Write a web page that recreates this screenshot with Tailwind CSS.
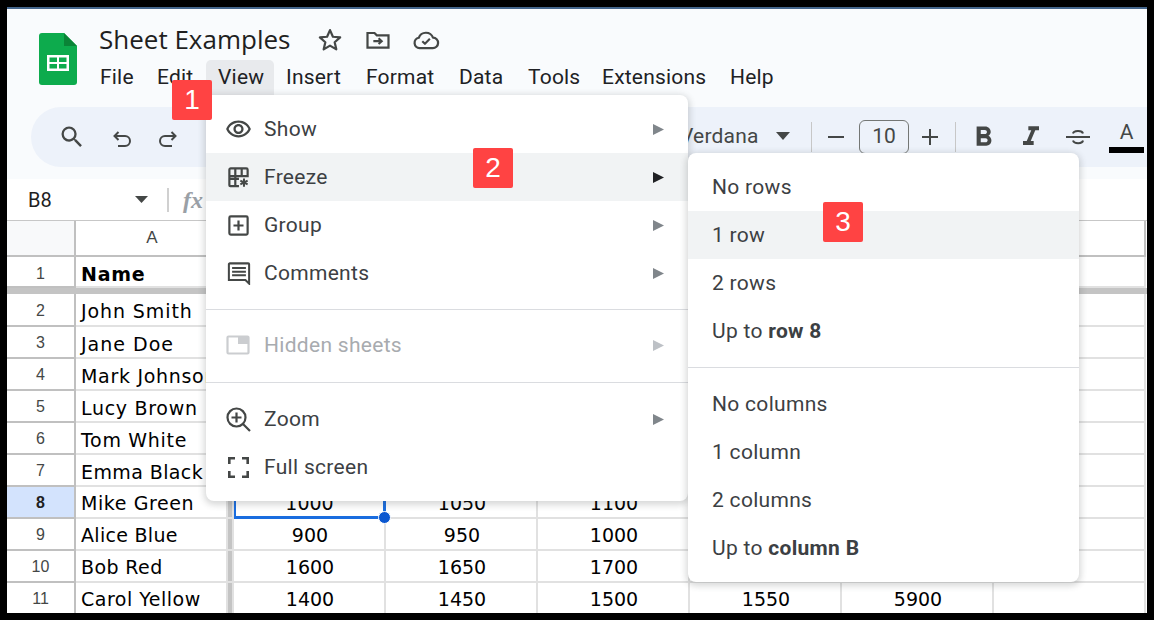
<!DOCTYPE html>
<html>
<head>
<meta charset="utf-8">
<script src="https://cdn.jsdelivr.net/npm/@tailwindcss/browser@4"></script>
</head>
<body class="bg-black">
<div class="relative w-[1154px] h-[620px] overflow-hidden bg-black pt-[7px] pl-[7px] font-['Roboto',sans-serif]">
  <div class="w-[1140px] h-[606px] overflow-hidden flex flex-col bg-[#f9fbfd] border-t-2 border-[#44668c]">
    <!-- header -->
    <div class="h-[98px] flex shrink-0">
      <svg class="ml-[32px] mt-[24px] w-[38px] h-[52px]" viewBox="0 0 38 52"><path d="M3 0H25L38 13V49a3 3 0 0 1-3 3H3a3 3 0 0 1-3-3V3a3 3 0 0 1 3-3z" fill="#0dab4d"/><path d="M25 0L38 13H25z" fill="#0a8437"/><path d="M8 22H30V38H8z M10.500 24.500V29H18V24.500z M20 24.500V29H27.500V24.500z M10.500 31V35.500H18V31z M20 31V35.500H27.500V31z" fill="#fff" fill-rule="evenodd"/></svg>
      <div class="ml-[10px] flex flex-col">
        <div class="flex items-center h-[36px] mt-[12px]">
          <span class="ml-[12px] text-[26px] leading-[36px] text-[#1f1f1f] font-['Open_Sans',sans-serif]">Sheet Examples</span>
          <svg class="ml-[26px] w-[28px] h-[28px] mt-[2px]" viewBox="0 0 24 24" fill="none" stroke="#444746" stroke-width="1.900" stroke-linejoin="round"><path d="M12 3.500l2.500 5.700 6.200.6-4.700 4.100 1.400 6.100L12 16.800l-5.400 3.200L8 13.900 3.300 9.800l6.200-.6z"/></svg>
          <svg class="ml-[20px] w-[28px] h-[28px] mt-[2px]" viewBox="0 0 24 24" fill="none" stroke="#444746" stroke-width="1.900"><path d="M3 18.500V6h6l2 2h10v10.500z"/><path d="M8 13h7M12.500 10.500L15.200 13l-2.700 2.500" stroke-width="1.800"/></svg>
          <svg class="ml-[20px] w-[28px] h-[28px] mt-[2px]" viewBox="0 0 24 24" fill="none" stroke="#444746" stroke-width="1.900" stroke-linejoin="round"><path d="M6.500 19a4.500 4.500 0 0 1-.7-8.900A6.500 6.500 0 0 1 18 10a4.500 4.500 0 0 1-.3 9z"/><path d="M8.800 13l2.300 2.300 4.200-4.300" stroke-width="1.800"/></svg>
        </div>
        <div class="flex h-[35px] mt-[3px] text-[21px] tracking-[0.2px] leading-[35px] text-[#202124]">
          <span class="w-[57px] ml-[13px]">File</span>
          <span class="w-[49px]">Edit</span>
          <span class="w-[68px] mr-[12px] pl-[12px] bg-[#e8eaed] rounded-t-[5px]">View</span>
          <span class="w-[80px]">Insert</span>
          <span class="w-[93px]">Format</span>
          <span class="w-[69px]">Data</span>
          <span class="w-[74px]">Tools</span>
          <span class="w-[128px]">Extensions</span>
          <span>Help</span>
        </div>
      </div>
    </div>
    <!-- toolbar -->
    <div class="h-[60px] ml-[24px] shrink-0 bg-[#edf2fa] rounded-l-[30px] flex items-center relative text-[#444746]">
      <svg class="ml-[27px] w-[28px] h-[28px]" viewBox="0 0 24 24" fill="#444746"><path d="M15.500 14h-.79l-.28-.27A6.471 6.471 0 0 0 16 9.500 6.500 6.500 0 1 0 9.500 16c1.610 0 3.090-.59 4.230-1.570l.27.28v.79l5 4.990L20.490 19l-4.990-5zm-6 0C7.010 14 5 11.990 5 9.500S7.010 5 9.500 5 14 7.010 14 9.500 11.990 14 9.500 14z"/></svg>
      <svg class="ml-[24px] w-[24px] h-[24px] mt-[4px]" viewBox="0 0 24 24" fill="none" stroke="#444746" stroke-width="2"><path d="M8.500 5L4.500 9l4 4M4.500 9H15a4.500 4.500 0 0 1 0 10H8"/></svg>
      <svg class="ml-[22px] w-[24px] h-[24px] mt-[4px]" viewBox="0 0 24 24" fill="none" stroke="#444746" stroke-width="2"><path d="M15.500 5l4 4-4 4M19.500 9H9a4.500 4.500 0 0 0 0 10h7"/></svg>
      <span class="ml-[500px] w-[83px] text-[21px] tracking-[0.2px] text-[#444746]">Verdana</span>
      <svg class="ml-[12px] w-[16px] h-[8px] -mt-[2px]" viewBox="0 0 16 8"><path d="M1 0h14L8 8z" fill="#444746"/></svg>
      <div class="ml-[20px] w-[1px] h-[30px] bg-[#c7c7c7]"></div>
      <svg class="ml-[15px] w-[18px] h-[18px]" viewBox="0 0 18 18"><path d="M1 8h16v2H1z" fill="#444746"/></svg>
      <div class="ml-[14px] w-[50px] h-[34px] border border-[#747775] rounded-[6px] text-center text-[21px] leading-[30px]">10</div>
      <svg class="ml-[12px] w-[18px] h-[18px]" viewBox="0 0 18 18"><path d="M1 8h7V1h2v7h7v2h-7v7H8v-7H1z" fill="#444746"/></svg>
      <div class="ml-[16px] w-[1px] h-[30px] bg-[#c7c7c7]"></div>
      <svg class="ml-[11px] w-[33px] h-[33px]" viewBox="0 0 24 24" fill="#444746"><path d="M15.600 10.790c.97-.67 1.650-1.770 1.650-2.790 0-2.260-1.750-4-4-4H7v14h7.040c2.090 0 3.710-1.700 3.710-3.790 0-1.520-.86-2.820-2.150-3.420zM10 6.500h3c.83 0 1.500.67 1.500 1.500s-.67 1.500-1.500 1.500h-3v-3zm3.500 9H10v-3h3.500c.83 0 1.500.67 1.500 1.500s-.67 1.500-1.500 1.500z"/></svg>
      <svg class="ml-[15px] w-[32px] h-[32px]" viewBox="0 0 24 24" fill="#444746"><path d="M10 4v3h2.210l-3.420 8H6v3h8v-3h-2.210l3.420-8H18V4z"/></svg>
      <svg class="ml-[18px] w-[26px] h-[24px]" viewBox="0 0 26 24" fill="none" stroke="#444746" stroke-width="2"><path d="M1 12h24M8 8.500C8.500 5.500 17 5 18 8.500M8 15.500c1 3.500 9.500 3.500 10 0"/></svg>
      <div class="ml-[18px] w-[35px] h-[36px] flex flex-col items-center">
        <span class="text-[21px] leading-[26px]">A</span>
        <div class="w-[35px] h-[6px] bg-black mt-[2px]"></div>
      </div>
    </div>
    <div class="h-[12px] shrink-0"></div>
    <!-- formula bar -->
    <div class="h-[42px] shrink-0 bg-white border-b border-[#c7c7c7] flex items-center text-[#1f1f1f]">
      <span class="ml-[21px] w-[100px] text-[20px]">B8</span>
      <svg class="ml-[7px] w-[13px] h-[7px]" viewBox="0 0 13 7"><path d="M0 0h13L6.500 7z" fill="#444746"/></svg>
      <div class="ml-[19px] w-[2px] h-[24px] bg-[#d0d0d0]"></div>
      <span class="ml-[14px] text-[24px] font-bold italic text-[#9aa0a6] font-['Liberation_Serif',serif]">fx</span>
    </div>
    <!-- grid -->
    <div class="flex-1 bg-white overflow-hidden font-['DejaVu_Sans',sans-serif] text-[19px] text-black [&>div]:grid [&>div]:grid-rows-[minmax(0,1fr)] [&>div]:grid-cols-[69px_152px_6px_152px_152px_152px_152px_152px_152px] [&>div>div]:border-r-2 [&>div>div]:border-b-2 [&>div>div]:border-[#e1e1e1] [&>div>div]:whitespace-nowrap [&>div>div]:overflow-hidden">
      <div class="h-[36px] text-[17px] text-[#444746] font-['Liberation_Sans',sans-serif] text-center leading-[34px] [&>div]:!border-[#c0c0c0]">
        <div class="bg-[#f8f9fa]"></div><div class="pl-[2px]">A</div><div></div><div></div><div></div><div></div><div></div><div></div><div></div>
      </div>
      <div class="h-[31px] leading-[30px] [&>div]:pt-[2px]">
        <div class="text-[16px] text-[#444746] text-center font-['Liberation_Sans',sans-serif] !border-[#c0c0c0]">1</div><div class="font-bold pl-[5px] tracking-[0.75px]">Name</div><div></div><div></div><div></div><div></div><div></div><div></div><div></div>
      </div>
      <div class="h-[6px] bg-[#c4c4c4]"></div>
      <div class="h-[33px] leading-[31px] [&>div]:pt-[2px]">
        <div class="text-[16px] leading-[29px] text-[#444746] text-center font-['Liberation_Sans',sans-serif] !border-[#c0c0c0]">2</div><div class="pl-[5px] tracking-[0.9px]">John Smith</div><div class="bg-[#c4c4c4]"></div><div></div><div></div><div></div><div></div><div></div><div></div>
      </div>
      <div class="h-[32px] leading-[30px] [&>div]:pt-[2px]">
        <div class="text-[16px] leading-[28px] text-[#444746] text-center font-['Liberation_Sans',sans-serif] !border-[#c0c0c0]">3</div><div class="pl-[5px] tracking-[1px]">Jane Doe</div><div class="bg-[#c4c4c4]"></div><div></div><div></div><div></div><div></div><div></div><div></div>
      </div>
      <div class="h-[32px] leading-[30px] [&>div]:pt-[2px]">
        <div class="text-[16px] leading-[28px] text-[#444746] text-center font-['Liberation_Sans',sans-serif] !border-[#c0c0c0]">4</div><div class="pl-[5px] tracking-[0.7px]">Mark Johnson</div><div class="bg-[#c4c4c4]"></div><div></div><div></div><div></div><div></div><div></div><div></div>
      </div>
      <div class="h-[32px] leading-[30px] [&>div]:pt-[2px]">
        <div class="text-[16px] leading-[28px] text-[#444746] text-center font-['Liberation_Sans',sans-serif] !border-[#c0c0c0]">5</div><div class="pl-[5px] tracking-[0.7px]">Lucy Brown</div><div class="bg-[#c4c4c4]"></div><div></div><div></div><div></div><div></div><div></div><div></div>
      </div>
      <div class="h-[32px] leading-[30px] [&>div]:pt-[2px]">
        <div class="text-[16px] leading-[28px] text-[#444746] text-center font-['Liberation_Sans',sans-serif] !border-[#c0c0c0]">6</div><div class="pl-[5px] tracking-[0.7px]">Tom White</div><div class="bg-[#c4c4c4]"></div><div></div><div></div><div></div><div></div><div></div><div></div>
      </div>
      <div class="h-[32px] leading-[30px] [&>div]:pt-[2px]">
        <div class="text-[16px] leading-[28px] text-[#444746] text-center font-['Liberation_Sans',sans-serif] !border-[#c0c0c0]">7</div><div class="pl-[5px] tracking-[0.4px]">Emma Black</div><div class="bg-[#c4c4c4]"></div><div></div><div></div><div></div><div></div><div></div><div></div>
      </div>
      <div class="h-[32px] leading-[29px] [&>div]:pt-[2px]">
        <div class="text-[16px] leading-[28px] text-[#1f1f1f] font-bold bg-[#d3e3fd] text-center font-['Liberation_Sans',sans-serif] !border-[#c0c0c0]">8</div><div class="pl-[5px] tracking-[0.6px]">Mike Green</div><div class="bg-[#c4c4c4]"></div><div class="text-center relative !overflow-visible !border-r-[#1a6ddf] !border-b-[#1a6ddf] !border-r-[3px] !border-b-[3px] border-l-2 !border-l-[#1a6ddf]">1000<div class="absolute -right-[8px] -bottom-[8px] w-[13px] h-[13px] rounded-full bg-[#0b57d0] border border-white"></div></div><div class="text-center pl-[2px]">1050</div><div class="text-center pl-[2px]">1100</div><div></div><div></div><div></div>
      </div>
      <div class="h-[32px] leading-[29px] [&>div]:pt-[2px]">
        <div class="text-[16px] leading-[28px] text-[#444746] text-center font-['Liberation_Sans',sans-serif] !border-[#c0c0c0]">9</div><div class="pl-[5px] tracking-[0.3px]">Alice Blue</div><div class="bg-[#c4c4c4]"></div><div class="text-center pl-[2px]">900</div><div class="text-center pl-[2px]">950</div><div class="text-center pl-[2px]">1000</div><div></div><div></div><div></div>
      </div>
      <div class="h-[32px] leading-[29px] [&>div]:pt-[2px]">
        <div class="text-[16px] leading-[28px] text-[#444746] text-center font-['Liberation_Sans',sans-serif] !border-[#c0c0c0]">10</div><div class="pl-[5px] tracking-[0.4px]">Bob Red</div><div class="bg-[#c4c4c4]"></div><div class="text-center pl-[2px]">1600</div><div class="text-center pl-[2px]">1650</div><div class="text-center pl-[2px]">1700</div><div></div><div></div><div></div>
      </div>
      <div class="h-[32px] leading-[29px] [&>div]:pt-[2px]">
        <div class="text-[16px] leading-[28px] text-[#444746] text-center font-['Liberation_Sans',sans-serif] !border-[#c0c0c0]">11</div><div class="pl-[5px] tracking-[0.5px]">Carol Yellow</div><div class="bg-[#c4c4c4]"></div><div class="text-center pl-[2px]">1400</div><div class="text-center pl-[2px]">1450</div><div class="text-center pl-[2px]">1500</div><div class="text-center pl-[2px]">1550</div><div class="text-center pl-[2px]">5900</div><div></div>
      </div>
    </div>
  </div>

  <!-- View menu -->
  <div class="absolute left-[206px] top-[95px] w-[482px] h-[406px] bg-white rounded-b-[8px] rounded-tr-[8px] shadow-[0_2px_6px_2px_rgba(60,64,67,0.2)] py-[10px] text-[21px] tracking-[0.3px] text-[#3c4043] [&_span]:pt-[2px]">
    <div class="h-[48px] flex items-center pl-[19px]">
      <svg class="w-[27px] h-[27px]" viewBox="0 0 24 24" fill="#444746"><path d="M12 6c3.790 0 7.170 2.130 8.820 5.500C19.170 14.870 15.790 17 12 17s-7.170-2.130-8.820-5.500C4.830 8.130 8.210 6 12 6m0-2C7 4 2.730 7.110 1 11.500 2.730 15.890 7 19 12 19s9.270-3.110 11-7.500C21.270 7.110 17 4 12 4zm0 5c1.380 0 2.500 1.120 2.500 2.500S13.380 14 12 14s-2.500-1.120-2.500-2.500S10.620 9 12 9m0-2c-2.480 0-4.500 2.020-4.500 4.500S9.520 16 12 16s4.500-2.020 4.500-4.500S14.480 7 12 7z"/></svg>
      <span class="ml-[12px] flex-1">Show</span>
      <svg class="mr-[24px] w-[11px] h-[11px]" viewBox="0 0 11 11"><path d="M0 0l11 5.500L0 11z" fill="#80868b"/></svg>
    </div>
    <div class="h-[48px] flex items-center pl-[22px] bg-[#f1f3f4]">
      <svg class="w-[21px] h-[21px]" viewBox="0 0 23 23" fill="none" stroke="#444746" stroke-width="2.400"><path d="M12 13H1.500V3a1.500 1.500 0 0 1 1.500-1.500h17A1.500 1.500 0 0 1 21.500 3v7H1.500M8 1.500V21M15 1.500V10M1.500 13v7a1 1 0 0 0 1 1H12"/><path d="M17.500 12.500v9M13.500 15l8 4M21.500 15l-8 4" stroke-width="2.200"/></svg>
      <span class="ml-[15px] flex-1">Freeze</span>
      <svg class="mr-[24px] w-[11px] h-[11px]" viewBox="0 0 11 11"><path d="M0 0l11 5.500L0 11z" fill="#202124"/></svg>
    </div>
    <div class="h-[48px] flex items-center pl-[22px]">
      <svg class="w-[21px] h-[21px]" viewBox="0 0 23 23" fill="none" stroke="#444746" stroke-width="2.400"><rect x="1.500" y="1.500" width="20" height="20" rx="1.500"/><path d="M11.500 6v11M6 11.500h11"/></svg>
      <span class="ml-[15px] flex-1">Group</span>
      <svg class="mr-[24px] w-[11px] h-[11px]" viewBox="0 0 11 11"><path d="M0 0l11 5.500L0 11z" fill="#80868b"/></svg>
    </div>
    <div class="h-[48px] flex items-center pl-[21px]">
      <svg class="w-[24px] h-[23px]" viewBox="0 0 25 25" fill="none" stroke="#444746" stroke-width="2.200"><path d="M1.500 19.500V2.500a1 1 0 0 1 1-1h20a1 1 0 0 1 1 1v21l-4-4z"/><path d="M5 6.500h15M5 10.500h15M5 14.500h15"/></svg>
      <span class="ml-[13px] flex-1">Comments</span>
      <svg class="mr-[24px] w-[11px] h-[11px]" viewBox="0 0 11 11"><path d="M0 0l11 5.500L0 11z" fill="#80868b"/></svg>
    </div>
    <div class="h-[1px] bg-[#dadce0] mt-[12px] mb-[11px]"></div>
    <div class="h-[48px] flex items-center pl-[20px] text-[#a8abaf]">
      <svg class="w-[24px] h-[20px]" viewBox="0 0 24 20" fill="none" stroke="#cbcdd0" stroke-width="2.200"><rect x="1.500" y="1.500" width="21" height="17" rx="1"/><path d="M12 1.500h10.500V9H12z" fill="#cbcdd0" stroke="none"/></svg>
      <span class="ml-[14px] flex-1">Hidden sheets</span>
      <svg class="mr-[24px] w-[11px] h-[11px]" viewBox="0 0 11 11"><path d="M0 0l11 5.500L0 11z" fill="#bdc1c6"/></svg>
    </div>
    <div class="h-[1px] bg-[#dadce0] mt-[13px] mb-[12px]"></div>
    <div class="h-[48px] flex items-center pl-[20px]">
      <svg class="w-[25px] h-[25px]" viewBox="0 0 25 25" fill="none" stroke="#444746" stroke-width="2.200"><circle cx="10.500" cy="10.500" r="9"/><path d="M17 17l7 7M10.500 5.500v10M5.500 10.500h10"/></svg>
      <span class="ml-[13px] flex-1">Zoom</span>
      <svg class="mr-[24px] w-[11px] h-[11px]" viewBox="0 0 11 11"><path d="M0 0l11 5.500L0 11z" fill="#80868b"/></svg>
    </div>
    <div class="h-[48px] flex items-center pl-[22px]">
      <svg class="w-[21px] h-[21px]" viewBox="0 0 21 21" fill="none" stroke="#444746" stroke-width="2.600"><path d="M1.300 7V1.300H7M14 1.300h5.700V7M1.300 14v5.700H7M14 19.700h5.700V14"/></svg>
      <span class="ml-[15px] flex-1">Full screen</span>
    </div>
  </div>

  <!-- Freeze submenu -->
  <div class="absolute left-[688px] top-[153px] w-[391px] h-[429px] bg-white rounded-[8px] shadow-[0_2px_6px_2px_rgba(60,64,67,0.2)] py-[10px] text-[21px] tracking-[0.3px] text-[#3c4043] [&>div]:h-[48px] [&>div]:flex [&>div]:items-center [&>div]:pl-[24px] [&>div]:pt-[2px]">
    <div>No rows</div>
    <div class="bg-[#f1f3f4]">1 row</div>
    <div>2 rows</div>
    <div class="whitespace-pre">Up to <b class="font-bold">row 8</b></div>
    <div class="!h-[1px] !pt-0 bg-[#dadce0] mt-[12px] mb-[12px]"></div>
    <div>No columns</div>
    <div>1 column</div>
    <div>2 columns</div>
    <div class="whitespace-pre">Up to <b class="font-bold">column B</b></div>
  </div>

  <!-- Step badges -->
  <div class="absolute left-[172px] top-[80px] w-[40px] h-[40px] bg-[#ff4343] rounded-[2px] flex items-center justify-center text-white text-[28px] font-['Liberation_Sans',sans-serif]">1</div>
  <div class="absolute left-[473px] top-[148px] w-[40px] h-[40px] bg-[#ff4343] rounded-[2px] flex items-center justify-center text-white text-[28px] font-['Liberation_Sans',sans-serif]">2</div>
  <div class="absolute left-[823px] top-[202px] w-[40px] h-[40px] bg-[#ff4343] rounded-[2px] flex items-center justify-center text-white text-[28px] font-['Liberation_Sans',sans-serif]">3</div>
</div>
</body>
</html>
